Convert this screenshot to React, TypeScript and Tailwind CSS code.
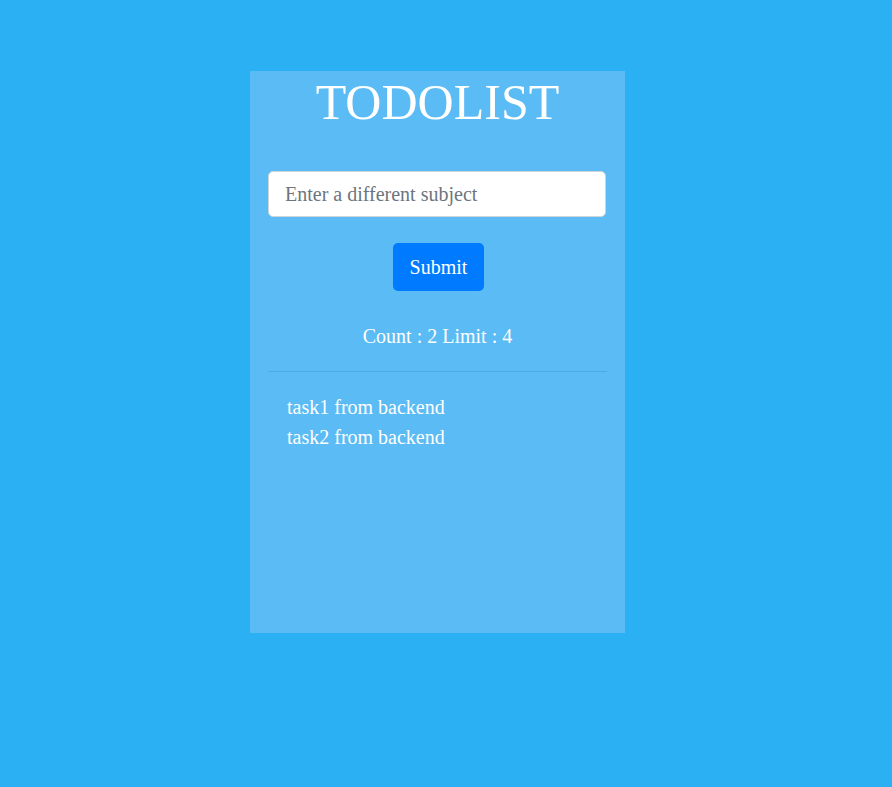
import React from "react";

export default function App() {
  const tasks = ["task1 from backend", "task2 from backend"];
  return (
    <div
      className="w-full min-h-[787px] bg-[#2cb0f4] pt-[71px]"
      style={{ fontFamily: '"Liberation Serif", "Times New Roman", serif' }}
    >
      <div className="ml-[250px] w-[375px] h-[562px] bg-[#5bbbf4] px-[18px] flex flex-col">
        <h1 className="text-[50px] leading-[60px] text-white text-center mt-[1px]">TODOLIST</h1>
        <input
          type="text"
          placeholder="Enter a different subject"
          className="mt-[39px] w-[338px] h-[46px] bg-white border border-[#ced4da] rounded-[5px] px-4 text-[20px] text-[#495057] placeholder:text-[#6c757d] outline-none"
        />
        <div className="flex justify-center mt-[26px] pl-[2px]">
          <button className="w-[91px] h-[48px] bg-[#007bff] rounded-[5px] text-white text-[20px] leading-[30px]">
            Submit
          </button>
        </div>
        <div className="mt-[30px] text-white text-[20px] leading-[30px] text-center">
          Count : 2 Limit : 4
        </div>
        <div className="mt-[20px] h-px bg-[#4aa9e6]" />
        <ul className="mt-[20px] pl-[19px]">
          {tasks.map((t) => (
            <li key={t} className="text-white text-[20px] leading-[30px]">
              {t}
            </li>
          ))}
        </ul>
      </div>
    </div>
  );
}
